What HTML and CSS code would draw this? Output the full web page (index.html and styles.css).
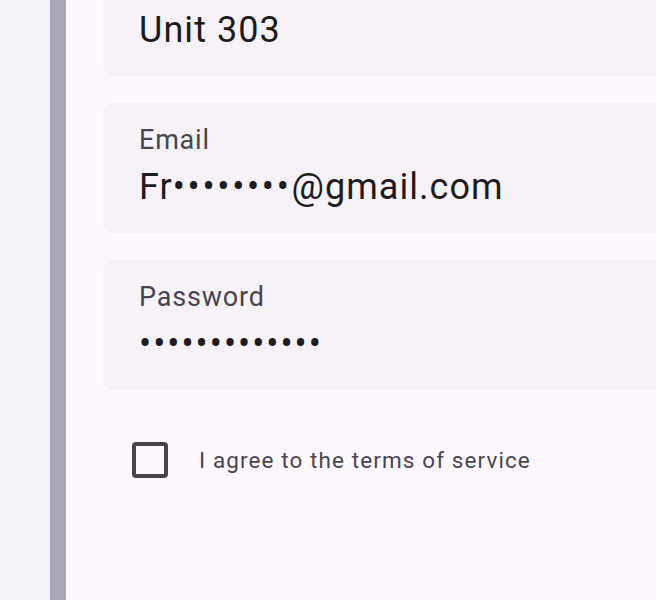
FILE: index.html
```html
<!DOCTYPE html>
<html>
<head>
<meta charset="utf-8">
<link rel="stylesheet" href="styles.css">
</head>
<body>
<div class="screen">
  <div class="rail"></div>
  <div class="divider"></div>
  <div class="panel">
    <div class="fields">
      <div class="field field-clipped">
        <div class="value">Unit 303</div>
      </div>
      <div class="field">
        <div class="label">Email</div>
        <div class="value">Fr<span class="dots dots-email">••••••••</span>@gmail.com</div>
      </div>
      <div class="field">
        <div class="label">Password</div>
        <div class="value"><span class="dots">•••••••••••••</span></div>
      </div>
    </div>
    <label class="agree">
      <span class="box"></span>
      <span class="agree-text">I agree to the terms of service</span>
    </label>
  </div>
</div>
</body>
</html>
```
FILE: styles.css
```css
html, body {
  margin: 0;
  padding: 0;
  overflow: hidden;
}
body {
  width: 656px;
  height: 600px;
  font-family: Roboto, "Liberation Sans", sans-serif;
}
.screen {
  display: flex;
  height: 600px;
}
.rail {
  width: 50px;
  flex: none;
  background: #f6f3f8;
}
.divider {
  width: 16px;
  flex: none;
  background: #aaa8b8;
}
.panel {
  flex: 1;
  background: #fdf7fe;
  padding-left: 37px;
  overflow: hidden;
}
.fields {
  display: flex;
  flex-direction: column;
  gap: 27px;
  margin-top: -54px;
}
.field {
  width: 640px;
  height: 130px;
  box-sizing: border-box;
  background: #f6f2f8;
  border-radius: 10px;
  padding: 19px 0 0 36px;
  display: flex;
  flex-direction: column;
  gap: 5px;
}
.field-clipped {
  padding-top: 60px;
}
.label {
  font-size: 27px;
  line-height: 36px;
  letter-spacing: 0.8px;
  color: #49454f;
}
.value {
  font-size: 36px;
  line-height: 48px;
  letter-spacing: 1.05px;
  color: #1d1b20;
  white-space: nowrap;
}
.dots {
  letter-spacing: 2px;
}
.dots-email {
  letter-spacing: 2.7px;
}
.agree {
  display: flex;
  align-items: center;
  margin-top: 52px;
  padding-left: 29px;
  gap: 31px;
}
.box {
  width: 36px;
  height: 36px;
  box-sizing: border-box;
  border: 4px solid #49454f;
  border-radius: 4px;
  flex: none;
}
.agree-text {
  font-size: 22.5px;
  letter-spacing: 1.1px;
  color: #49454f;
}
```
